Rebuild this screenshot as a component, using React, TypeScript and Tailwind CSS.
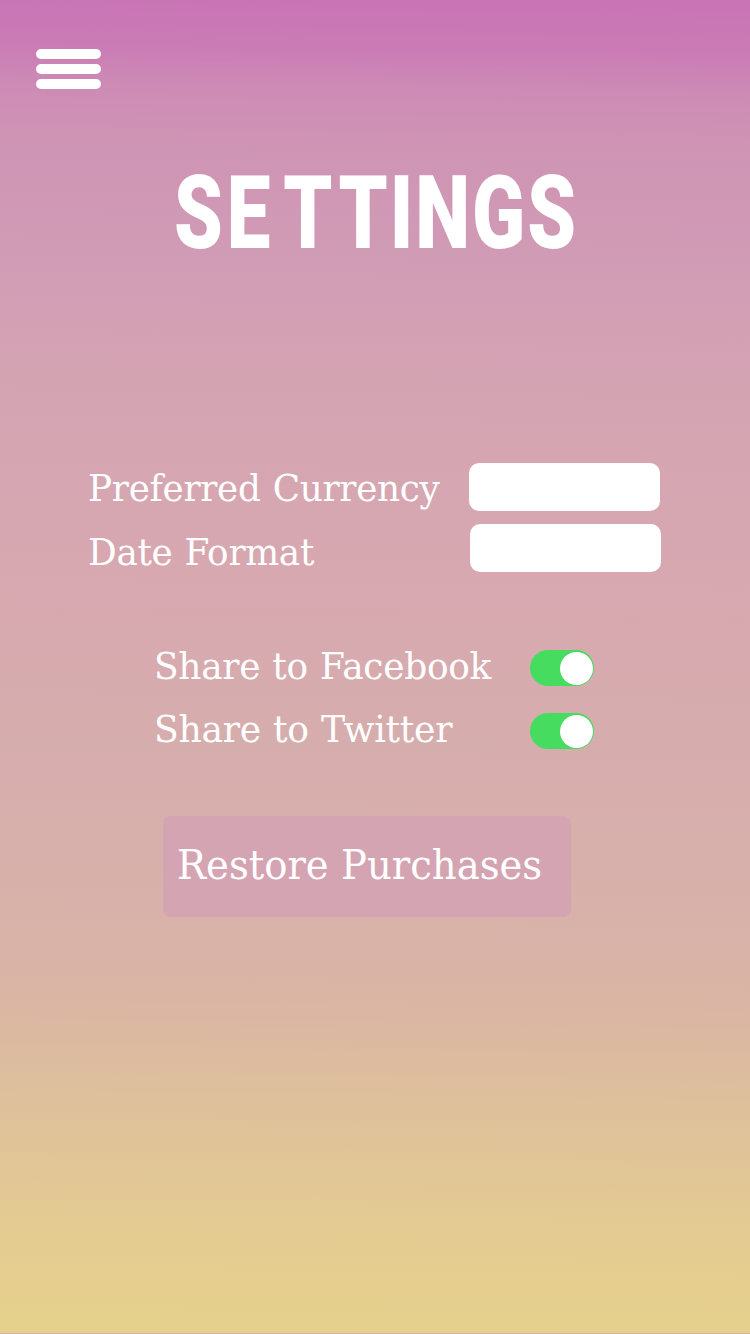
const labelClass =
  "whitespace-nowrap font-['DejaVu_Serif',serif] text-[38px] leading-[48px] tracking-[-0.3px] [word-spacing:1px] text-white origin-left";

function Toggle() {
  return (
    <div
      role="switch"
      aria-checked="true"
      className="flex h-9 w-16 items-center justify-end rounded-full bg-[#46dc5f] pr-[1.5px]"
    >
      <div className="size-[33px] rounded-full bg-white" />
    </div>
  );
}

export default function App() {
  return (
    <main className="flex h-[1334px] w-[750px] flex-col overflow-hidden border-b border-[#d8b0ac] bg-[linear-gradient(180.8deg,#c974b5_0%,#ca7bb5_4%,#cd8bb5_7%,#cf94b4_11%,#d09ab5_18%,#d4a3b3_28%,#d7a8b0_43%,#d6adad_56%,#d8b1aa_68%,#dab5a4_75%,#dec19b_83%,#e4cb92_92%,#e6d18c_100%)]">
      <button aria-label="Menu" className="ml-9 mt-[49px] flex w-[65px] flex-col gap-[5px]">
        <span className="h-[10px] w-full rounded-full bg-white" />
        <span className="h-[10px] w-full rounded-full bg-white" />
        <span className="h-[10px] w-full rounded-full bg-white" />
      </button>

      <h1 className="mt-[74px] flex h-[100px] w-full items-center whitespace-nowrap pl-[174px] font-['Roboto',sans-serif] text-[102.7px] font-black leading-[100px] text-white">
        <span className="inline-block origin-left scale-x-[0.76] tracking-[2.6px]">
          <span className="tracking-[5px]">S</span>
          <span className="tracking-[17px]">E</span>
          <span className="tracking-[8px]">T</span>TINGS
        </span>
      </h1>

      <section className="mt-[200px] flex flex-col gap-[13px] pl-[88px]">
        <div className="flex h-12 items-center">
          <div className="w-[381px] pt-0.5">
            <div className={`${labelClass} scale-x-[0.942]`}>Preferred Currency</div>
          </div>
          <div className="h-12 w-[191px] rounded-[10px] bg-white" />
        </div>
        <div className="flex h-12 items-center">
          <div className="w-[382px] pt-2">
            <div className={`${labelClass} scale-x-[0.942]`}>Date Format</div>
          </div>
          <div className="h-12 w-[191px] rounded-[10px] bg-white" />
        </div>
      </section>

      <section className="mt-[78px] flex flex-col gap-[27px] pl-[154px]">
        <div className="flex h-9 items-center">
          <div className="w-[376px] pb-1">
            <div className={`${labelClass} scale-x-[0.946]`}>Share to Facebook</div>
          </div>
          <Toggle />
        </div>
        <div className="flex h-9 items-center">
          <div className="w-[376px] pb-1">
            <div className={`${labelClass} scale-x-[0.952]`}>Share to Twitter</div>
          </div>
          <Toggle />
        </div>
      </section>

      <button className="ml-[163px] mt-[67px] flex h-[101px] w-[408px] items-center rounded-lg bg-[#d5a4b2] pb-1 pl-[14px]">
        <span className="origin-left scale-x-[0.941] whitespace-nowrap font-['DejaVu_Serif',serif] text-[41px] leading-[52px] text-white">
          Restore Purchases
        </span>
      </button>
    </main>
  );
}
